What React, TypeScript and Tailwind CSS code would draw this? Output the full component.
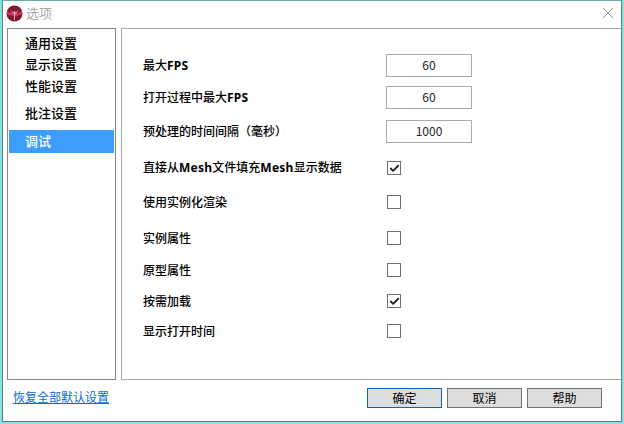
import { X, Check } from "lucide-react";
import type { ReactNode } from "react";

const font = { fontFamily: '"Noto Sans CJK SC", "Noto Sans", sans-serif' };

const navItems = [
  { label: "通用设置", cls: "h-[21px]" },
  { label: "显示设置", cls: "h-[22px]" },
  { label: "性能设置", cls: "h-[22px]" },
  { label: "批注设置", cls: "h-[27px] mt-[2px]" },
];

// latin runs in the labels are heavier and wider than the CJK around them
const Latin = ({ children }: { children: ReactNode }) => (
  <span className="font-bold tracking-[0.25px]" style={{ fontFamily: '"Noto Sans", sans-serif' }}>
    {children}
  </span>
);

const Field = ({ label, value, cls }: { label: ReactNode; value: string; cls: string }) => (
  <div className={`flex items-center justify-between ${cls}`}>
    <span className="text-[12px] font-medium text-black pb-[1px]">{label}</span>
    <div className="w-[86px] h-[23px] border border-[#ababab] bg-white flex items-center justify-center text-[12px] text-[#222] pb-[1px]">
      {value}
    </div>
  </div>
);

const CheckRow = ({ label, checked, cls }: { label: ReactNode; checked?: boolean; cls: string }) => (
  <div className={`flex items-center ${cls}`}>
    <span className="w-[244px] text-[12px] font-medium text-black pb-[1px]">{label}</span>
    <div className="w-[14px] h-[14px] border border-[#707070] bg-white flex items-center justify-center">
      {checked && <Check className="w-[11px] h-[11px] text-[#222]" strokeWidth={4} />}
    </div>
  </div>
);

const Btn = ({ label, primary }: { label: string; primary?: boolean }) => (
  <div
    className={`w-[75px] h-[20px] bg-[#dddddd] border flex items-center justify-center text-[12px] text-black pb-[1px] ${
      primary ? "border-[#0a64b8]" : "border-[#707070]"
    }`}
  >
    {label}
  </div>
);

export default function App() {
  return (
    <div className="w-[624px] h-[424px] bg-[#7fe3e3] px-[2px] pb-[2px] overflow-hidden" style={font}>
      <div className="w-full h-[422px] bg-white border border-[#6fa8a8] border-b-[#777] border-l-[#777] border-r-[#777] flex flex-col">
        <div className="h-[27px] flex items-center pl-[3px] pr-[3px] pb-[3px] shrink-0">
          <svg width="17" height="17" viewBox="0 0 17 17">
            <circle cx="8.5" cy="8.5" r="8" fill="#7f1a30" />
            <path d="M1 6 Q8.5 11 16 6 L16 9 Q8.5 13 1 9 Z" fill="#d9305f" />
            <path d="M8 6h1v9H8z M4 5l4.5 3L13 5l-4.5 5z" fill="#f0a8bc" />
          </svg>
          <span className="ml-[3px] text-[13px] text-[#a8a8a8]">选项</span>
          <X className="ml-auto w-[20px] h-[20px] text-[#808080]" strokeWidth={1} />
        </div>
        <div className="flex h-[352px] pl-[4px] shrink-0">
          <div className="w-[109px] border border-[#828790] p-[1px] pt-[3px] shrink-0">
            {navItems.map((n) => (
              <div key={n.label} className={`flex items-center pl-[16px] text-[13px] font-medium text-black ${n.cls}`}>
                {n.label}
              </div>
            ))}
            <div className="h-[23px] mt-[4px] bg-[#3c9dfb] flex items-center pl-[16px] pb-[2px] text-[13px] font-medium text-white">
              调试
            </div>
          </div>
          <div className="ml-[5px] flex-1 border-t border-l border-b border-[#ababab] pl-[21px] pt-[25px]">
            <div className="w-[329px]">
              <Field label={<>最大<Latin>FPS</Latin></>} value="60" cls="h-[23px]" />
              <Field label={<>打开过程中最大<Latin>FPS</Latin></>} value="60" cls="h-[23px] mt-[9px]" />
              <Field label="预处理的时间间隔（毫秒）" value="1000" cls="h-[23px] mt-[11px]" />
            </div>
            <CheckRow
              label={<>直接从<Latin>Mesh</Latin>文件填充<Latin>Mesh</Latin>显示数据</>}
              checked
              cls="h-[16px] mt-[17px]"
            />
            <CheckRow label="使用实例化渲染" cls="h-[16px] mt-[18px]" />
            <CheckRow label="实例属性" cls="h-[16px] mt-[20px]" />
            <CheckRow label="原型属性" cls="h-[16px] mt-[16px]" />
            <CheckRow label="按需加载" checked cls="h-[16px] mt-[15px]" />
            <CheckRow label="显示打开时间" cls="h-[16px] mt-[14px]" />
          </div>
        </div>
        <div className="flex items-center h-[20px] mt-[8px] pl-[10px] pr-[19px]">
          <span className="text-[12px] text-[#0a6ad6] underline pb-[3px]">恢复全部默认设置</span>
          <div className="ml-auto flex gap-[5px]">
            <Btn label="确定" primary />
            <Btn label="取消" />
            <Btn label="帮助" />
          </div>
        </div>
      </div>
    </div>
  );
}
